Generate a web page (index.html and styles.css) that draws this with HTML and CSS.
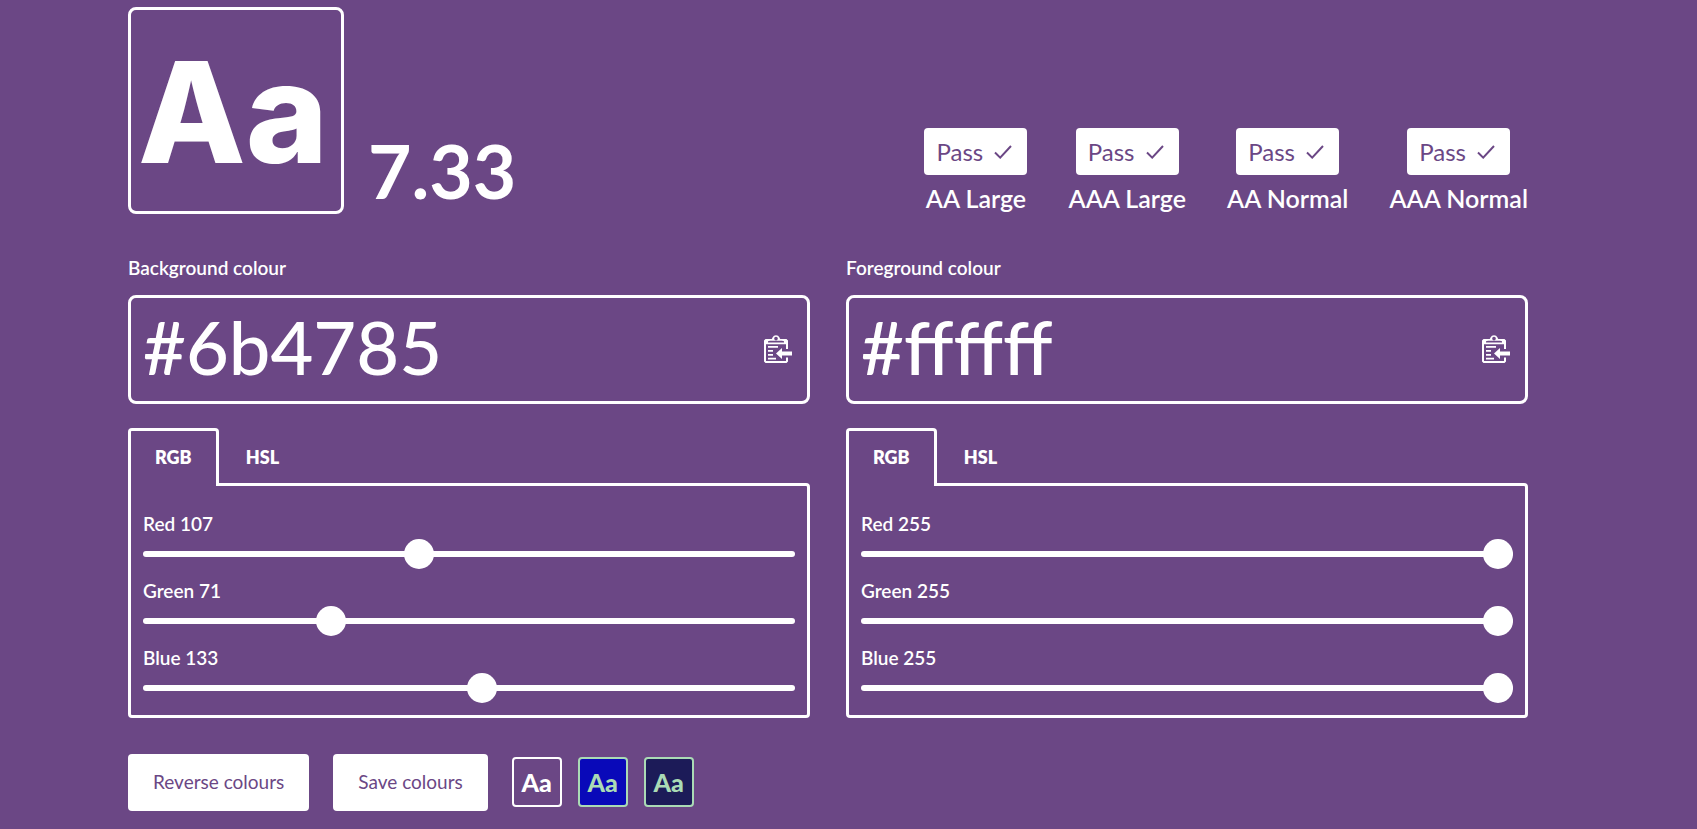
FILE: index.html
```html
<!DOCTYPE html>
<html lang="en">
<head>
<meta charset="utf-8">
<title>Colour contrast checker</title>
<link rel="stylesheet" href="styles.css">
</head>
<body>
<svg class="sprite" aria-hidden="true">
  <symbol id="check" viewBox="0 0 18 14"><path d="M1 7.5 6.2 12.6 17 1" fill="none" stroke="currentColor" stroke-width="2"/></symbol>
  <symbol id="paste" viewBox="0 0 28 28">
    <path fill="currentColor" fill-rule="evenodd" d="M1.500 4H7C8 4 8 3.500 8.500 2.500A3.900 3.900 0 0 1 15.500 2.500C16 3.500 16 4 17 4H22.500L24 5.500V14H22V9.300H2V26H22V22.500H24V26.500L22.500 28H1.500L0 26.500V5.500ZM12 1.700A1.800 1.800 0 1 0 12.010 1.700ZM4 6.300V7.500H20V6.300L18 5.700H6Z"/>
    <path fill="currentColor" d="M4 11H14V12.700H4ZM4 15H9V16.700H4ZM4 19H9V20.700H4ZM4 22.800H12V24.500H4ZM12 18.500 18 13V16.500H28V20.500H18V24Z"/>
  </symbol>
</svg>
<main class="page">
  <header class="summary">
    <div class="preview">Aa</div>
    <strong class="ratio">7.33</strong>
    <ul class="grades">
      <li class="grade"><span class="badge">Pass <svg class="check"><use href="#check"/></svg></span><span class="grade-name">AA Large</span></li>
      <li class="grade"><span class="badge">Pass <svg class="check"><use href="#check"/></svg></span><span class="grade-name">AAA Large</span></li>
      <li class="grade"><span class="badge">Pass <svg class="check"><use href="#check"/></svg></span><span class="grade-name">AA Normal</span></li>
      <li class="grade"><span class="badge">Pass <svg class="check"><use href="#check"/></svg></span><span class="grade-name">AAA Normal</span></li>
    </ul>
  </header>
  <div class="columns">
    <section class="colour">
      <label class="label" for="bg">Background colour</label>
      <div class="field">
        <input class="hex" id="bg" type="text" value="#6b4785" spellcheck="false">
        <button class="paste" type="button" aria-label="Paste background colour"><svg class="paste-icon"><use href="#paste"/></svg></button>
      </div>
      <div class="tabs" role="tablist">
        <button class="tab tab-active" type="button" role="tab" aria-selected="true">RGB</button>
        <button class="tab" type="button" role="tab" aria-selected="false">HSL</button>
      </div>
      <div class="panel" role="tabpanel">
        <label class="label" for="bg-r">Red 107</label>
        <input class="slider" id="bg-r" type="range" min="0" max="255" value="107">
        <label class="label" for="bg-g">Green 71</label>
        <input class="slider" id="bg-g" type="range" min="0" max="255" value="71">
        <label class="label" for="bg-b">Blue 133</label>
        <input class="slider" id="bg-b" type="range" min="0" max="255" value="133">
      </div>
    </section>
    <section class="colour">
      <label class="label" for="fg">Foreground colour</label>
      <div class="field">
        <input class="hex" id="fg" type="text" value="#ffffff" spellcheck="false">
        <button class="paste" type="button" aria-label="Paste foreground colour"><svg class="paste-icon"><use href="#paste"/></svg></button>
      </div>
      <div class="tabs" role="tablist">
        <button class="tab tab-active" type="button" role="tab" aria-selected="true">RGB</button>
        <button class="tab" type="button" role="tab" aria-selected="false">HSL</button>
      </div>
      <div class="panel" role="tabpanel">
        <label class="label" for="fg-r">Red 255</label>
        <input class="slider" id="fg-r" type="range" min="0" max="255" value="255">
        <label class="label" for="fg-g">Green 255</label>
        <input class="slider" id="fg-g" type="range" min="0" max="255" value="255">
        <label class="label" for="fg-b">Blue 255</label>
        <input class="slider" id="fg-b" type="range" min="0" max="255" value="255">
      </div>
    </section>
  </div>
  <footer class="actions">
    <button class="action" type="button">Reverse colours</button>
    <button class="action" type="button">Save colours</button>
    <div class="swatches">
      <button class="swatch" type="button">Aa</button>
      <button class="swatch swatch-blue" type="button">Aa</button>
      <button class="swatch swatch-navy" type="button">Aa</button>
    </div>
  </footer>
</main>
</body>
</html>
```
FILE: styles.css
```css
:root { --bg: #6b4785; --fg: #ffffff; }
* { box-sizing: border-box; }
body {
  margin: 0;
  background: var(--bg);
  color: var(--fg);
  font-family: Lato, "Open Sans", sans-serif;
  font-size: 19px;
}
button, input { font: inherit; color: inherit; }
.sprite { display: none; }
.page { padding: 7px 169px 16px 128px; }

.summary { display: flex; align-items: flex-end; margin-bottom: 40px; }
.preview {
  border: 3px solid;
  border-radius: 8px;
  padding: 4px 0 0 7px;
  min-width: 216px;
  font-family: Inter, Lato, sans-serif;
  font-size: 140px;
  font-weight: 800;
  line-height: 197px;
}
.ratio { margin-left: 24px; font-size: 75px; font-weight: 700; line-height: 88px; }
.grades { display: flex; gap: 41px; margin: 0 0 0 auto; padding: 0; list-style: none; }
.grade { display: flex; flex-direction: column; align-items: center; gap: 8px; font-size: 24px; }
.badge {
  display: flex;
  align-items: center;
  justify-content: space-between;
  width: 103px;
  height: 47px;
  padding: 0 15px 0 12px;
  border-radius: 4px;
  background: var(--fg);
  color: var(--bg);
}
.check { width: 18px; height: 14px; }
.grade-name { font-size: 25px; font-weight: 600; line-height: 31px; }

.columns { display: grid; grid-template-columns: repeat(2, minmax(0, 1fr)); gap: 36px; }
.label { display: block; font-weight: 600; line-height: 28px; }
.field {
  display: flex;
  align-items: center;
  height: 109px;
  margin: 13px 0 24px;
  padding: 0 15px 2px 12px;
  border: 3px solid;
  border-radius: 8px;
}
.hex {
  flex: 1;
  min-width: 0;
  height: 100%;
  padding: 0 0 4px;
  border: 0;
  outline: 0;
  background: none;
  font-size: 74px;
  font-weight: 500;
}
.paste { display: flex; padding: 0; border: 0; background: none; }
.paste-icon { width: 28px; height: 28px; }

.tabs { display: flex; position: relative; margin-bottom: -3px; }
.tab {
  height: 58px;
  padding: 0 24px 3px;
  border: 3px solid transparent;
  border-bottom: 0;
  background: none;
  font-size: 18px;
  font-weight: 800;
}
.tab-active { border-color: var(--fg); border-radius: 4px 4px 0 0; background: var(--bg); }
.panel { padding: 24px 12px 12px; border: 3px solid; border-radius: 0 4px 4px 4px; }
.slider {
  -webkit-appearance: none;
  appearance: none;
  display: block;
  width: 100%;
  height: 30px;
  margin: 1px 0 8px;
  background: none;
}
.slider:last-child { margin-bottom: 0; }
.slider::-webkit-slider-runnable-track { height: 6px; border-radius: 3px; background: var(--fg); }
.slider::-webkit-slider-thumb {
  -webkit-appearance: none;
  width: 30px;
  height: 30px;
  margin-top: -12px;
  border-radius: 50%;
  background: var(--fg);
}

.actions { display: flex; align-items: center; gap: 24px; margin-top: 36px; }
.action {
  height: 57px;
  padding: 0 25px 2px;
  border: 0;
  border-radius: 4px;
  background: var(--fg);
  color: var(--bg);
}
.swatches { display: flex; gap: 16px; padding-bottom: 1px; }
.swatch {
  width: 50px;
  height: 50px;
  padding: 0;
  border: 2px solid;
  border-radius: 4px;
  background: var(--bg);
  font-size: 25px;
  font-weight: 900;
}
.swatch-blue { background: #0909b9; color: #aadbb5; }
.swatch-navy { background: #1c1b58; color: #aadbb5; }
```
